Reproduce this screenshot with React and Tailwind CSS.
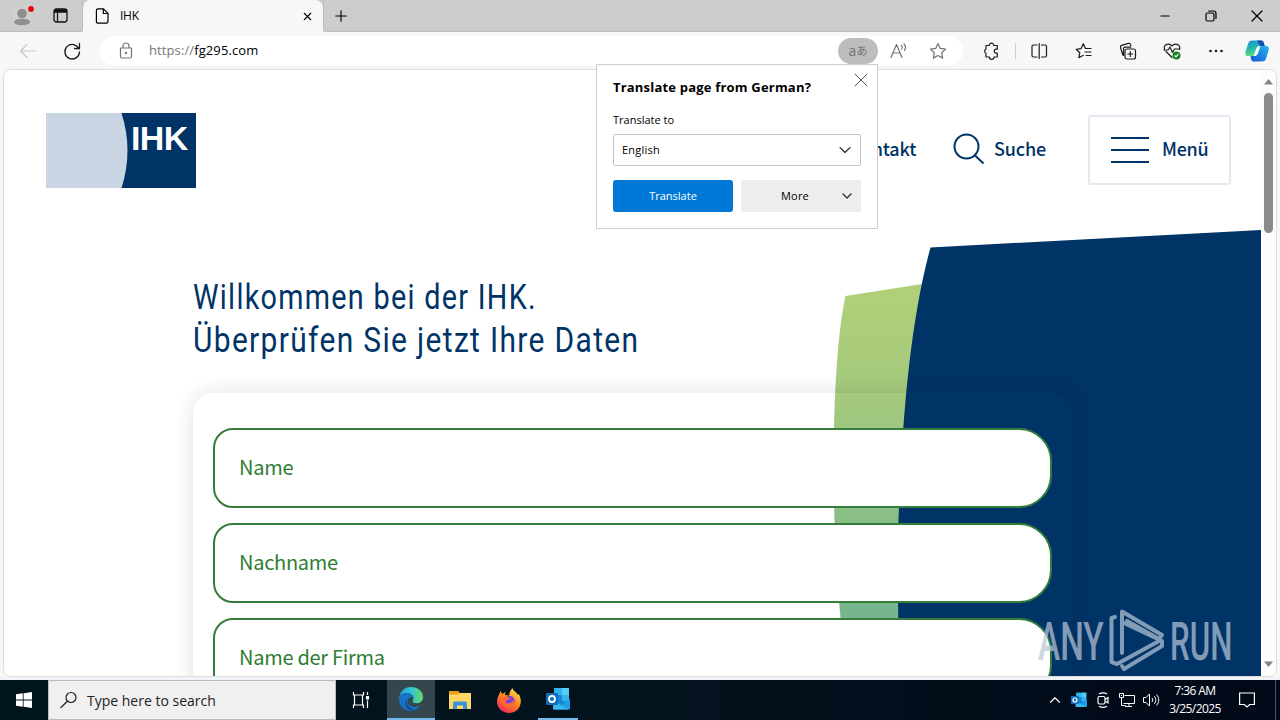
import { Minus, Plus, X, ChevronDown, ChevronUp } from "lucide-react";

const fields = ["Name", "Nachname", "Name der Firma"];

function Svg({ className, children, box = "0 0 20 20" }) {
  return (
    <svg
      className={className}
      viewBox={box}
      fill="none"
      stroke="currentColor"
      strokeWidth="1.2"
      strokeLinecap="round"
      strokeLinejoin="round"
    >
      {children}
    </svg>
  );
}

function TabStrip() {
  return (
    <header className="flex h-8 shrink-0 bg-[#cdcdcd]">
      <div className="flex w-[83px] items-center rounded-br-md border-r border-b border-[#bdbdbd] pl-3">
        <svg className="h-5 w-6" viewBox="0 0 24 20">
          <circle cx="10" cy="10" r="9.5" fill="#d2d0ce" />
          <circle cx="10" cy="7.5" r="4.8" fill="#918f8e" />
          <path d="M2 16.5c0-3 4-3.800 8-3.800s8 .8 8 3.800c-1 1.800-4 2.800-8 2.800s-7-1-8-2.800z" fill="#918f8e" />
          <circle cx="19" cy="2.900" r="2.900" fill="#e3060f" />
        </svg>
        <svg className="ml-[17px] h-[15px] w-[15px]" viewBox="0 0 15 15" fill="none" stroke="#111">
          <rect x="1" y="1" width="13" height="13" rx="2.500" strokeWidth="1.300" />
          <path d="M1 3h13" strokeWidth="3.500" />
          <path d="M4.500 4v10" strokeWidth="1.200" />
        </svg>
      </div>
      <div className="flex w-[240px] items-center rounded-t-lg bg-[#f7f7f7] pr-[9px] pl-3">
        <Svg className="h-4 w-[14px] text-black" box="0 0 14 16">
          <path d="M3 .8h5.500L13 5.300v8.200c0 1-.6 1.700-1.600 1.700H3c-1 0-1.600-.7-1.600-1.700v-11C1.400 1.500 2 .8 3 .8zM8.300 1v4.500H13" />
        </Svg>
        <span className="ml-[11px] flex-1 text-[12px] tracking-[-0.02em] text-black">IHK</span>
        <X className="h-[13px] w-[13px] text-black" strokeWidth={2} />
      </div>
      <div className="flex flex-1 items-center rounded-bl-md border-b border-l border-[#bdbdbd] pl-2">
        <Plus className="h-[18px] w-[18px] text-black" strokeWidth={1.5} />
        <div className="ml-auto flex items-center text-black">
          <span className="flex w-[46px] justify-center">
            <Minus className="h-3.5 w-3.5" strokeWidth={2} />
          </span>
          <span className="flex w-[46px] justify-center">
            <Svg className="h-3 w-3" box="0 0 12 12">
              <rect x="1" y="3" width="8" height="8" rx="1.500" />
              <path d="M3.500 1h5A2.500 2.500 0 0 1 11 3.500v5" />
            </Svg>
          </span>
          <span className="flex w-[46px] justify-center">
            <Svg className="h-3 w-3" box="0 0 12 12">
              <path d="M1 1l10 10M11 1L1 11" />
            </Svg>
          </span>
        </div>
      </div>
    </header>
  );
}

function ToolbarIcon({ children }) {
  return (
    <span className="flex w-[44.2px] justify-center">
      <Svg className="h-5 w-5">{children}</Svg>
    </span>
  );
}

function Toolbar() {
  return (
    <div className="flex h-[37px] shrink-0 items-center bg-[#f7f7f7] text-[#1b1b1b]">
      <div className="flex w-[100px] items-center pl-[18px]">
        <Svg className="h-5 w-5 text-[#c9c9c9]">
          <path d="M18 10H2.500M9 3.500L2.500 10L9 16.500" />
        </Svg>
        <Svg className="ml-6 h-5 w-5">
          <path d="M17 8A7.300 7.300 0 1 0 17.500 11M17.500 2.500V7.500H12.500" strokeWidth="1.300" />
        </Svg>
      </div>
      <div className="flex h-[30px] w-[863px] items-center rounded-full bg-white">
        <Svg className="ml-4 h-5 w-5 text-[#767676]">
          <path d="M4.500 7h11v8.500c0 1-.5 1.500-1.500 1.500H6c-1 0-1.500-.5-1.500-1.500zM7 7V5a3 3 0 0 1 6 0v2" />
          <circle cx="10" cy="12" r=".6" fill="currentColor" />
        </Svg>
        <span className="ml-[13px] flex-1 text-[13px] tracking-[0.008em] text-[#777]">
          https://<span className="text-black">fg295.com</span>
        </span>
        <span className="flex h-[26px] w-10 items-center justify-center rounded-full bg-[#bdbdbd] text-[#707070]">
          <span className="text-[14px] leading-none">a</span>
          <span className="font-['Noto_Sans_CJK_JP',sans-serif] text-[11px] leading-none">あ</span>
        </span>
        <Svg className="ml-[11px] h-5 w-5 text-[#737373]">
          <path d="M2 16.500L7.500 3.500L13 16.500M4 12h7M12.500 4.500c1 1 1 2.500.3 3.500M15 2.800c1.800 2 1.800 4.500.5 6.500" />
        </Svg>
        <Svg className="mr-[15px] ml-[19px] h-5 w-5 text-[#737373]">
          <path d="M10 2.500l2.300 4.900 5.300.7-3.900 3.700 1 5.300-4.700-2.600-4.700 2.600 1-5.300L2.400 8.100l5.300-.7z" />
        </Svg>
      </div>
      <div className="flex w-[53px] items-center justify-center pl-[3px]">
        <Svg className="h-5 w-5">
          <path d="M5 4.500h3.200a2.300 2.300 0 0 1 4.600 0h3.500v3.700h-1.500a2 2 0 0 0 0 3.900h1.500v3.900H13a2.300 2.300 0 0 1-4.600 0H5v-3.700a2.300 2.300 0 0 1 0-4.200z" />
        </Svg>
      </div>
      <span className="-ml-px h-4 w-px bg-[#cfcfcf]" />
      <span className="w-px" />
      <ToolbarIcon>
        <path d="M8 4H4.500C3.500 4 3 4.500 3 5.500v9c0 1 .5 1.500 1.500 1.500H8M12.500 4H16c1 0 1.500.5 1.500 1.500v9c0 1-.5 1.500-1.500 1.500h-3.500M10.200 2.500v15" />
      </ToolbarIcon>
      <ToolbarIcon>
        <path d="M18 7.500h-5.500L10.300 2.800 8.100 7.600l-5 .7 3.700 3.400-.9 5 4.400-2.400M12 11h6M13 14.500h5" />
      </ToolbarIcon>
      <ToolbarIcon>
        <path d="M5.800 14L3.500 6.500C3.200 5.300 3.600 4.700 4.500 4.400l7-2c1-.3 1.700.1 2 1l.4 1.300M6.500 14.500V8c0-1.200.6-1.800 1.800-1.800h5.500" />
        <rect x="8" y="8" width="10.500" height="10" rx="2" />
        <path d="M13.300 10.500v5M10.800 13h5" />
      </ToolbarIcon>
      <ToolbarIcon>
        <path d="M10 16.500l-6-6M2.500 8.500C1 3 7.500 1.500 10 5c2.500-3.500 9-2 7.500 3.500M2 9h4l2-3 2.500 5.500L12.500 8H18" />
        <circle cx="14.500" cy="14.500" r="4" fill="#16801c" stroke="none" />
        <path d="M12.800 14.800l1.200 1 2.200-2.500" stroke="#fff" />
      </ToolbarIcon>
      <ToolbarIcon>
        <g fill="currentColor" stroke="none">
          <circle cx="4.500" cy="10" r="1.300" />
          <circle cx="10" cy="10" r="1.300" />
          <circle cx="15.500" cy="10" r="1.300" />
        </g>
      </ToolbarIcon>
      <svg className="ml-[7px] h-6 w-6" viewBox="0 0 24 24">
        <defs>
          <linearGradient id="copilotA" x1="0" y1="0" x2="0.3" y2="1">
            <stop offset="0" stopColor="#1c8fe0" />
            <stop offset="0.5" stopColor="#24b5b0" />
            <stop offset="1" stopColor="#5fdc7c" />
          </linearGradient>
          <linearGradient id="copilotB" x1="1" y1="0" x2="0" y2="1">
            <stop offset="0" stopColor="#23b7ee" />
            <stop offset="1" stopColor="#1557d6" />
          </linearGradient>
        </defs>
        <path d="M7 1.500h9c2 0 2.500 1 3 3l.7 2.500h-3c-2 0-3 .8-3.600 2.700l-1.600 5C11 16.500 10 17 8.500 17H3C.5 17 0 15 .6 12.500l2.600-8C3.800 2.500 5 1.500 7 1.500z" fill="url(#copilotA)" />
        <path d="M16 7h5c2.500 0 3.200 1.800 2.600 4.200l-2.500 8c-.7 2.300-2 3.300-4 3.300H9c-2.500 0-3-2-3.600-5.500h3.400c1.700 0 2.500-.8 3-2.300l1.700-5.200C14 7.800 14.600 7 16 7z" fill="url(#copilotB)" />
        <path d="M15.500 7L12.800 14.700C12.200 16.300 11 17 8.500 17l2.800-7.500C11.900 7.700 12.800 7 15.500 7z" fill="#f4fbff" />
        <path d="M12 1.500h4c2 0 2.500 1 3 3l.7 2.500H16c-1.700 0-2.500-3-4-5.500z" fill="#174fae" />
      </svg>
    </div>
  );
}

function TranslatePopup() {
  return (
    <div className="absolute top-16 left-[596px] z-10 h-[165px] w-[282px] border border-[#cfcfcf] bg-white px-4 pt-[13px] text-[11px] text-black">
      <div className="flex h-5 items-center justify-between">
        <h2 className="text-[13px] font-bold tracking-[0.015em] whitespace-nowrap">
          Translate page from German?
        </h2>
        <Svg className="-mt-4 -mr-[7px] h-3.5 w-3.5 text-[#555]" box="0 0 14 14">
          <path d="M1 1l12 12M13 1L1 13" strokeWidth="1" />
        </Svg>
      </div>
      <p className="mt-[14px] h-4 leading-4">Translate to</p>
      <div className="mt-[6px] flex h-8 items-center justify-between rounded-xs border border-[#c2c2c2] px-2">
        <span className="tracking-[0.02em]">English</span>
        <ChevronDown className="-mr-[3px] h-5 w-5 text-[#333]" strokeWidth={1.4} />
      </div>
      <div className="mt-[14px] flex gap-2">
        <button className="h-8 w-[120px] rounded-[3px] bg-[#0078d7] text-white">Translate</button>
        <button className="flex h-8 w-[120px] items-center rounded-[3px] bg-[#ededed] pr-1.5">
          <span className="flex-1 pl-2.5 tracking-[0.02em]">More</span>
          <ChevronDown className="h-4 w-4 text-[#333]" strokeWidth={2} />
        </button>
      </div>
    </div>
  );
}

function PageHeader() {
  return (
    <div className="flex h-40 items-center pr-[30px] pl-[42px] font-['Noto_Sans_CJK_SC',sans-serif] text-[18px] leading-7 font-medium tracking-[-0.01em] text-[#003366]">
      <div className="flex h-[75px] w-[150px] overflow-hidden bg-[#003366]">
        <svg className="h-[75px] w-[82px]" viewBox="0 0 82 75">
          <path d="M0 0h75.500q12 37.500 0 75H0z" fill="#cad5e4" />
        </svg>
        <span className="mt-[6px] ml-[3px] font-['Liberation_Sans',sans-serif] text-[34px] leading-[38px] font-bold tracking-[-0.02em] text-white">
          IHK
        </span>
      </div>
      <span className="ml-auto pb-[4px]">Kontakt</span>
      <svg className="mb-[2px] ml-[37px] h-8 w-8" viewBox="0 0 32 32" fill="none" stroke="#003366" strokeWidth="2">
        <circle cx="13.500" cy="13.500" r="12" />
        <path d="M21.500 22l9 8.500" />
      </svg>
      <span className="ml-[9px] pb-[4px]">Suche</span>
      <div className="ml-[42px] flex h-[70px] w-[143px] items-center rounded-[3px] border-2 border-[#e4eaf1] pl-[21px]">
        <div className="flex w-[38px] flex-col gap-2.5">
          <span className="h-0.5 bg-[#003366]" />
          <span className="h-0.5 bg-[#003366]" />
          <span className="h-0.5 bg-[#003366]" />
        </div>
        <span className="ml-[13px] pb-[4px] tracking-[-0.015em]">Menü</span>
      </div>
    </div>
  );
}

function HeroShapes() {
  return (
    <svg className="absolute inset-0 h-[606px] w-[1257px]" viewBox="4 70 1257 606">
      <defs>
        <linearGradient id="leaf" x1="0" y1="0" x2="0" y2="1">
          <stop offset="0" stopColor="#b1d077" />
          <stop offset="0.3" stopColor="#a4c97d" />
          <stop offset="1" stopColor="#68b094" />
        </linearGradient>
      </defs>
      <path d="M845.500 296L935 282V676H848Q834 590 833.500 465Q834 350 845.500 296z" fill="url(#leaf)" />
      <path d="M930.500 247.500L1261 230V676H900Q896 570 899 508Q905 340 930.500 247.500z" fill="#003366" />
    </svg>
  );
}

function Watermark() {
  return (
    <div className="absolute right-[29px] bottom-0 flex h-[72px] w-[194px] items-center justify-between text-[53px] font-medium text-[#b9c7d8] opacity-70">
      <span className="w-[66px]">
        <span className="inline-block origin-left scale-x-[.63] font-['Roboto',sans-serif] leading-none">ANY</span>
      </span>
      <svg className="h-[62px] w-[56px]" viewBox="0 0 56 62" fill="none" stroke="currentColor" strokeWidth="4" strokeLinejoin="round" strokeLinecap="round">
        <path d="M6 8L2.500 9V53L8 55L50 32" />
        <path d="M13 44V2.500L53 26L50 30L18 12" />
        <path d="M13 57L15 60L53 37V32L15 14" />
      </svg>
      <span className="w-[62px]">
        <span className="inline-block origin-left scale-x-[.59] font-['Roboto',sans-serif] leading-none">RUN</span>
      </span>
    </div>
  );
}

function WebPage() {
  return (
    <main className="flex h-[608px] shrink-0 bg-[#f7f7f7] px-[3px]">
      <div className="flex w-[1274px] overflow-hidden rounded-lg border border-[#dedede] bg-white">
        <div className="relative w-[1257px] overflow-hidden">
          <HeroShapes />
          <div className="relative">
            <PageHeader />
            <h1 className="mt-[46px] ml-[189px] h-[117px] font-['Roboto',sans-serif] text-[35px] leading-[43px] tracking-[0.045em] whitespace-nowrap text-[#003366]">
              <span className="block origin-left scale-x-[.822]">Willkommen bei der IHK.</span>
              <span className="block origin-left scale-x-[.855]">Überprüfen Sie jetzt Ihre Daten</span>
            </h1>
            <form className="ml-[189px] flex h-[480px] w-[880px] flex-col gap-[15px] rounded-[20px] px-5 pt-[35px] shadow-[0_0_20px_rgba(0,0,0,0.12)]">
              {fields.map((name) => (
                <label
                  key={name}
                  className="flex h-20 w-[839px] shrink-0 items-center rounded-l-[20px] rounded-r-[33px] border-2 border-[#347d3a] bg-white pb-0.5 pl-6 font-['Noto_Sans_CJK_SC',sans-serif] text-[20px] tracking-[-0.014em] text-[#2e7d32]"
                >
                  {name}
                </label>
              ))}
            </form>
          </div>
          <Watermark />
        </div>
        <div className="flex w-[15px] flex-col items-center bg-[#fcfcfc] py-2">
          <svg className="h-[7px] w-[9px]" viewBox="0 0 9 7">
            <path d="M0 6.500L4.500 1L9 6.500z" fill="#858585" />
          </svg>
          <span className="mt-2 h-[140px] w-[9px] rounded-full bg-[#8b8b8b]" />
          <svg className="mt-auto h-[7px] w-[9px]" viewBox="0 0 9 7">
            <path d="M0 .5h9L4.500 6z" fill="#858585" />
          </svg>
        </div>
      </div>
    </main>
  );
}

function OutlookIcon({ className }) {
  return (
    <svg className={className} viewBox="0 0 24 22">
      <path d="M8 0h15v19H8z" fill="#1387d6" />
      <path d="M8 0h8v7H8zM16 7h7v6h-7z" fill="#36b3ee" />
      <path d="M16 0h7v7h-7z" fill="#55ccf7" />
      <path d="M7 12l8.500 5L24 11v9c0 1-.5 1.500-1.500 1.500H9c-1 0-2-.5-2-1.500z" fill="#1c9de4" />
      <path d="M7 13l16 8.500H9c-1 0-2-.5-2-1.500z" fill="#37b9ef" />
      <rect y="5" width="12" height="12" rx="1" fill="#0f6cbd" />
      <circle cx="6" cy="11" r="3" fill="none" stroke="#fff" strokeWidth="1.800" />
    </svg>
  );
}

function EdgeIcon() {
  return (
    <svg className="h-6 w-6" viewBox="0 0 24 24">
      <defs>
        <linearGradient id="edgeTop" x1="0" y1="0.5" x2="1" y2="0.5">
          <stop offset="0" stopColor="#229be0" />
          <stop offset="0.5" stopColor="#31c4d8" />
          <stop offset="1" stopColor="#65dc62" />
        </linearGradient>
      </defs>
      <path d="M0 12C.5 4.500 5.500 0 12 0c7 0 12 4.500 12 10 0 4-3 6.300-6.500 6.300-2.500 0-4-1-4-2 0-.8 1-1.300 1-3.300C14.500 8 11 6 7.500 6 3.500 6 .7 8.500 0 12z" fill="url(#edgeTop)" />
      <path d="M0 12c.5-3.800 3.500-6 7.500-6 3.700 0 7 2 7 5-1.500-1.700-5.700-1-5.700 3.500 0 4.800 6 7.500 12 3.800C19 22 16 24 12 24 5 24 0 19 0 12z" fill="#1672c4" />
      <path d="M8.800 12.500c-3 5.500 2.500 9.500 7 10.500-8 2.500-12.500-7-7-10.500z" fill="#114a8b" />
    </svg>
  );
}

function FirefoxIcon() {
  return (
    <svg className="h-[25px] w-6" viewBox="0 0 24 25">
      <defs>
        <linearGradient id="fox" x1="0.8" y1="0" x2="0.2" y2="1">
          <stop offset="0" stopColor="#ffe14a" />
          <stop offset="0.45" stopColor="#ff8a1e" />
          <stop offset="1" stopColor="#f5215e" />
        </linearGradient>
      </defs>
      <path d="M3.500 3l1.800 3 3.200-2-.5 3 4 .5C12.500 4 14 1.500 15.500 0c.5 3 4 4 5.500 7l.8-1c1.500 3 2.200 5.500 2 8C23.300 20.500 18.500 25 12 25S0 20 0 13.500C0 9.500 2 7 3.500 3z" fill="url(#fox)" />
      <circle cx="12.500" cy="13" r="5.300" fill="#7b3fd6" />
      <path d="M5 10c3-3 6-1 8 0-1 2-4 1.500-4.500 4 2 2.500 6 2 8-2 2 5-2 8-5.500 8S4.500 15 5 10z" fill="#ff6a2c" />
    </svg>
  );
}

function Taskbar() {
  return (
    <footer className="flex h-10 shrink-0 bg-gradient-to-r from-[#00141d] via-[#03131e] to-[#020817] text-white">
      <div className="flex w-12 items-center justify-center">
        <svg className="h-4 w-4" viewBox="0 0 16 16" fill="#fff">
          <path d="M0 2.300L6.800 1.300V7.600H0zM7.600 1.200L16 0v7.600H7.600zM0 8.400h6.800v6.300L0 13.700zM7.600 8.400H16V16l-8.400-1.200z" />
        </svg>
      </div>
      <div className="flex w-72 items-center border border-[#bcbcbc] bg-[#f0f0f0] text-[#222]">
        <Svg className="ml-[11px] h-[18px] w-[18px]" box="0 0 18 18">
          <circle cx="11" cy="6.500" r="5" />
          <path d="M7.300 10.300L1 16.500" />
        </Svg>
        <span className="ml-[9px] text-[14px]">Type here to search</span>
      </div>
      <div className="flex w-[49px] items-center justify-center">
        <svg className="h-4 w-[18px]" viewBox="0 0 18 16" fill="none" stroke="#fff" strokeWidth="1.200">
          <path d="M1.500 0v3h10V0M1.500 16v-3h10v3M2.500 3v10M10.500 3v10M15.500 0v3M15.500 8.500V16" />
          <path d="M14.500 4.500H16.500V7H14.500z" fill="#fff" />
        </svg>
      </div>
      <div className="ml-0.5 flex w-12 items-center justify-center border-b-2 border-[#76b9ed] bg-[#34474f]">
        <EdgeIcon />
      </div>
      <div className="flex w-[49px] items-center justify-center">
        <svg className="h-[18px] w-[22px]" viewBox="0 0 22 18">
          <path d="M0 0h9l2 2h11v3H0z" fill="#e8a31c" />
          <path d="M0 3.500h9l2-1.500h11v16H0z" fill="#ffd765" />
          <path d="M4 18v-6c0-1 .5-1.500 1.500-1.500h11c1 0 1.500.5 1.500 1.500v6h-4v-3.500H8V18z" fill="#3b94d9" />
        </svg>
      </div>
      <div className="flex w-[49px] items-center justify-center">
        <FirefoxIcon />
      </div>
      <div className="flex w-[49px] items-center justify-center">
        <span className="flex h-10 w-10 items-center justify-center border-b-2 border-[#76b9ed]">
          <OutlookIcon className="h-[22px] w-6" />
        </span>
      </div>
      <div className="ml-auto flex items-center">
        <ChevronUp className="h-[18px] w-[18px]" strokeWidth={1.5} />
        <OutlookIcon className="ml-[7px] h-4 w-4" />
        <svg className="ml-2 h-4 w-4" viewBox="0 0 16 16" fill="none" stroke="#fff" strokeWidth="1.200">
          <rect x="3" y="4.500" width="7" height="7.500" rx="1.500" />
          <path d="M10 7.500l3-2v5.500l-3-2M4 2c2-1.500 6-1.500 8 0M4 14.300c2 1.500 6 1.500 8 0" />
        </svg>
        <svg className="ml-2 h-4 w-4" viewBox="0 0 16 16" fill="none" stroke="#fff">
          <path d="M5.500 3.500h10v8h-11M10 11.500v2.500M6 14.500h7M.5 1.500h4v4h-4zM2.500 5.500v8h4M2 3.500h1" />
        </svg>
        <svg className="ml-2 h-4 w-[17px]" viewBox="0 0 17 16" fill="none" stroke="#fff">
          <path d="M.5 5.500h2.500l3.500-3.500v12L3 10.500H.5zM9 6c1 1.500 1 2.500 0 4M11.300 4.300c2 2.500 2 5 0 7.500M13.500 2.500c3 3.500 3 7.500 0 11" />
        </svg>
        <div className="ml-[8px] w-[54px] text-center text-[12px] leading-[18px] tracking-[-0.05em] whitespace-nowrap">
          <div>7:36 AM</div>
          <div>3/25/2025</div>
        </div>
        <svg className="ml-[17px] h-4 w-4" viewBox="0 0 16 16" fill="none" stroke="#fff" strokeWidth="1.200">
          <path d="M.6 1h14.800v11.500h-4.700L8 15l-2.700-2.500H.6z" />
        </svg>
        <span className="ml-5 h-10 w-[5px] border-l border-[#4b545e]" />
      </div>
    </footer>
  );
}

export default function App() {
  return (
    <div className="relative flex h-[720px] w-[1280px] flex-col overflow-hidden bg-[#f0f4f8] font-['Open_Sans','Noto_Sans',sans-serif]">
      <TabStrip />
      <Toolbar />
      <WebPage />
      <div className="h-[3px] shrink-0" />
      <TranslatePopup />
      <Taskbar />
    </div>
  );
}
